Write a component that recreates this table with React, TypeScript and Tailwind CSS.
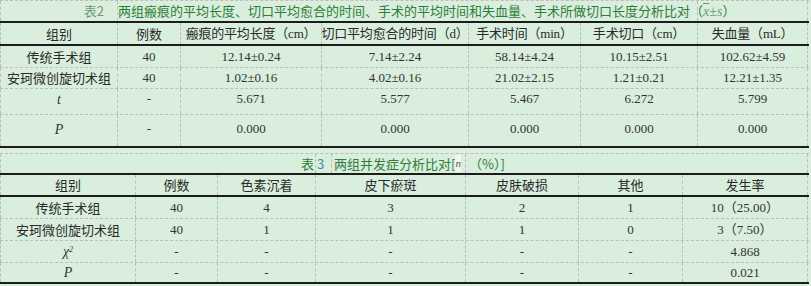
import React from "react";

const cjk = "font-['Noto_Sans_CJK_SC','Noto_Sans',sans-serif]";
const num = "font-['Liberation_Serif','Noto_Sans_CJK_SC',serif]";

type Cell = { w: number; text?: React.ReactNode; cls?: string };

function Row({ cells, h, bottom }: { cells: Cell[]; h: string; bottom: "black" | "dash" }) {
  return (
    <div
      className={`flex ${h} ${
        bottom === "black" ? "border-b-2 border-b-[#1c1c1c]" : "border-b border-dashed border-b-[#bdbdbd]"
      }`}
    >
      {cells.map((c, i) => (
        <div
          key={i}
          style={{ width: c.w }}
          className={`shrink-0 flex items-center justify-center border-l border-dashed border-l-[#bdbdbd] text-[#2a2a2a] whitespace-nowrap ${
            i === cells.length - 1 ? "border-r border-r-[#bdbdbd]" : ""
          } ${c.cls ?? ""}`}
        >
          {c.text}
        </div>
      ))}
    </div>
  );
}

const W2 = [117, 63, 141, 147, 112, 117, 111];
const W3 = [135, 82, 98, 150, 113, 104, 126];

function mk(widths: number[], vals: React.ReactNode[], cls: string) {
  return widths.map((w, i) => ({
    w,
    text: vals[i],
    cls: i === 0 && typeof vals[0] === "string" && /[\u4e00-\u9fff]/.test(vals[0] as string) ? `${cjk} text-[13px]` : cls,
  }));
}

const it = (s: React.ReactNode) => <span className={`${num} italic text-[14px]`}>{s}</span>;

// header with a latin unit in parens
const hu = (zh: string, unit: string) => (
  <span className={`${cjk} text-[13px] tracking-[-0.2px]`}>
    {zh}（<span className={`${num} text-[13px]`}>{unit}</span>）
  </span>
);

export default function App() {
  const hd = `${cjk} text-[13px]`;
  const nm = `${num} text-[13px] text-[#333]`;
  return (
    <div className="w-[811px] h-[286px] bg-[#d9eedd] overflow-hidden">
      {/* table 2 */}
      <div className="w-[809px] border-t border-dashed border-t-[#bdbdbd]">
        <div className="flex h-[22px] border-b-2 border-b-[#1c1c1c]">
          <div className={`w-[117px] shrink-0 flex items-center justify-end pr-[13px] border-l border-dashed border-l-[#bdbdbd] ${cjk} text-[13px] text-[#6f9a74]`}>
            表2
          </div>
          <div className={`w-[580px] shrink-0 flex items-center border-l border-dashed border-l-[#bdbdbd] whitespace-nowrap overflow-visible ${cjk} text-[13px] text-[#2f7d3a] relative z-10`}>
            两组瘢痕的平均长度、切口平均愈合的时间、手术的平均时间和失血量、手术所做切口长度分析比对（
            <span className={`${num} italic text-[14px] text-[#6f9a74] overline`}>x</span>
            <span className={`${num} text-[14px] text-[#6f9a74]`}>±</span>
            <span className={`${num} italic text-[14px] text-[#6f9a74]`}>s</span>）
          </div>
          <div className="w-[111px] shrink-0 border-l border-r border-dashed border-[#bdbdbd]" />
        </div>
        <Row
          h="h-[23px]"
          bottom="black"
          cells={mk(
            W2,
            ["组别", "例数", hu("瘢痕的平均长度", "cm"), hu("切口平均愈合的时间", "d"), hu("手术时间", "min"), hu("手术切口", "cm"), hu("失血量", "mL")],
            hd
          )}
        />
        <Row h="h-[22px]" bottom="dash" cells={mk(W2, ["传统手术组", "40", "12.14±0.24", "7.14±2.24", "58.14±4.24", "10.15±2.51", "102.62±4.59"], nm)} />
        <Row h="h-[21px]" bottom="dash" cells={mk(W2, ["安珂微创旋切术组", "40", "1.02±0.16", "4.02±0.16", "21.02±2.15", "1.21±0.21", "12.21±1.35"], nm)} />
        <Row h="h-[26px]" bottom="dash" cells={mk(W2, [it("t"), "-", "5.671", "5.577", "5.467", "6.272", "5.799"], `${nm} pb-[5px]`)} />
        <Row h="h-[33px]" bottom="black" cells={mk(W2, [it("P"), "-", "0.000", "0.000", "0.000", "0.000", "0.000"], `${nm} pb-[3px]`)} />
      </div>

      {/* table 3 */}
      <div className="w-[809px] mt-[5px] border-t border-dashed border-t-[#bdbdbd]">
        <div className="flex h-[21px] border-b-2 border-b-[#1c1c1c]">
          <div className={`w-[315px] shrink-0 flex items-center justify-end pr-[1px] border-l border-dashed border-l-[#bdbdbd] ${cjk} text-[13px] text-[#2f7d3a]`}>
            表
          </div>
          <div className={`w-[16px] shrink-0 flex items-center pl-[1px] border-l border-dashed border-l-[#bdbdbd] ${cjk} text-[13px] text-[#3f8fa0]`}>
            3
          </div>
          <div className={`w-[134px] shrink-0 flex items-center pl-[2px] border-l border-dashed border-l-[#bdbdbd] whitespace-nowrap ${cjk} text-[13px] text-[#2f7d3a]`}>
            两组并发症分析比对[<span className={`${num} italic text-[11px] text-[#555] bg-[#eef6ef]`}>n</span>
          </div>
          <div className={`w-[343px] shrink-0 flex items-center pl-[3px] border-l border-r border-dashed border-[#bdbdbd] whitespace-nowrap ${cjk} text-[13px] text-[#2f7d3a]`}>
            （%）]
          </div>
        </div>
        <Row h="h-[22px]" bottom="black" cells={mk(W3, ["组别", "例数", "色素沉着", "皮下瘀斑", "皮肤破损", "其他", "发生率"], hd)} />
        <Row h="h-[22px]" bottom="dash" cells={mk(W3, ["传统手术组", "40", "4", "3", "2", "1", "10（25.00）"], nm)} />
        <Row h="h-[22px]" bottom="dash" cells={mk(W3, ["安珂微创旋切术组", "40", "1", "1", "1", "0", "3（7.50）"], nm)} />
        <Row
          h="h-[22px]"
          bottom="dash"
          cells={mk(W3, [<span className={`${num} italic text-[14px]`}>χ<sup className="text-[8px]">2</sup></span>, "-", "-", "-", "-", "-", "4.868"], nm)}
        />
        <Row h="h-[21px]" bottom="black" cells={mk(W3, [it("P"), "-", "-", "-", "-", "-", "0.021"], nm)} />
      </div>
    </div>
  );
}
